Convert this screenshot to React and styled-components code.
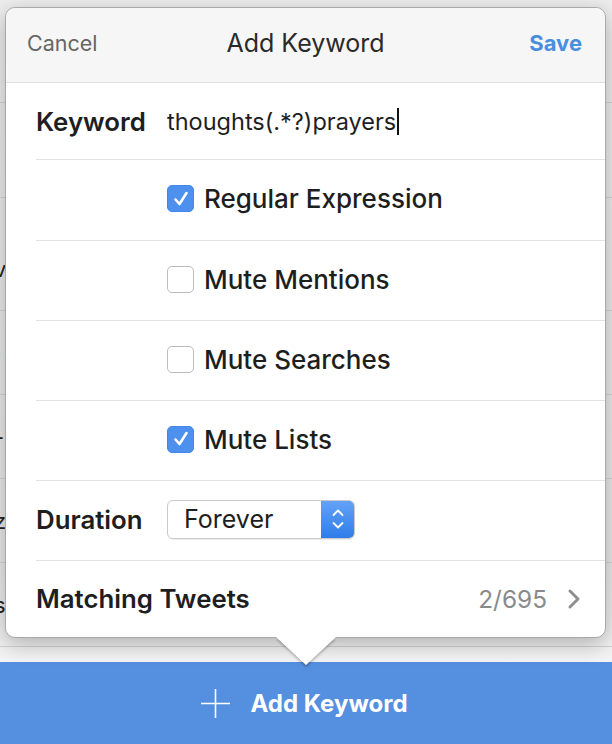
import React from 'react';
import styled, { createGlobalStyle } from 'styled-components';

const GlobalStyle = createGlobalStyle`
  html, body {
    margin: 0;
    padding: 0;
    background: #f4f4f4;
  }
  * {
    box-sizing: border-box;
  }
`;

const Page = styled.div`
  position: relative;
  width: 612px;
  height: 744px;
  overflow: hidden;
  display: flex;
  flex-direction: column;
  font-family: Inter, 'Noto Sans', sans-serif;
  background: #f3f3f3;
`;

// the list that sits behind the popover, only its edges show
const BackList = styled.div`
  flex: 1;
  min-height: 0;
  overflow: hidden;
  display: flex;
  flex-direction: column;
  background: linear-gradient(#eeeeee, #e9e9e9 85%, #f4f4f4);
`;

const BackRow = styled.div`
  height: ${p => p.$h}px;
  flex-shrink: 0;
  display: flex;
  align-items: center;
  justify-content: space-between;
  border-bottom: ${p => (p.$plain ? 'none' : '1px solid #d4d4d4')};
  font-size: 22px;
  color: #222;
`;

const BackText = styled.span`
  margin-left: -6px;
`;

const BackLink = styled.span`
  color: #4a86d6;
  font-weight: 600;
  margin-right: -8px;
`;

const AddBar = styled.div`
  height: 82px;
  flex-shrink: 0;
  background: #558fdf;
  display: flex;
  align-items: center;
  justify-content: center;
  gap: 19px;
  color: #fff;
  font-size: 24px;
  font-weight: 700;
  padding-right: 4px;
`;

const Popover = styled.div`
  position: absolute;
  left: 5px;
  top: 7px;
  width: 601px;
  height: 631px;
  background: #fff;
  border: 1px solid #a9a9a9;
  border-radius: 10px;
  box-shadow: 0 6px 22px rgba(0, 0, 0, 0.28);
  display: flex;
  flex-direction: column;
`;

const Arrow = styled.div`
  position: absolute;
  left: 270px;
  bottom: -28px;
  width: 0;
  height: 0;
  border-left: 30px solid transparent;
  border-right: 30px solid transparent;
  border-top: 28px solid #fff;
  filter: drop-shadow(0 2px 1px rgba(0, 0, 0, 0.25));
`;

const Header = styled.div`
  height: 75px;
  flex-shrink: 0;
  display: grid;
  grid-template-columns: 1fr auto 1fr;
  align-items: center;
  padding: 0 23px 4px 21px;
  background: #f6f6f6;
  border-bottom: 1px solid #dcdcdc;
  border-radius: 10px 10px 0 0;
`;

const HeaderButton = styled.span`
  font-size: ${p => (p.$primary ? 22 : 21.5)}px;
  color: ${p => (p.$primary ? '#4a8ee0' : '#666')};
  font-weight: ${p => (p.$primary ? 700 : 400)};
  justify-self: ${p => (p.$primary ? 'end' : 'start')};
`;

const Title = styled.span`
  font-size: 25px;
  color: #2a2a2a;
  font-weight: 400;
  margin-left: 2px;
`;

const Row = styled.div`
  height: ${p => p.$h || 80}px;
  flex-shrink: 0;
  display: flex;
  align-items: center;
  margin-left: 30px;
  padding-right: 24px;
  padding-bottom: ${p => (p.$first ? 0 : 3)}px;
  border-bottom: ${p => (p.$last ? 'none' : '1px solid #e2e2e2')};
`;

const Label = styled.span`
  width: ${p => (p.$auto ? 'auto' : '131px')};
  flex-shrink: 0;
  font-size: 25.8px;
  font-weight: 600;
  color: #1e1e1e;
`;

const Value = styled.span`
  font-size: 23.5px;
  color: #1e1e1e;
  display: flex;
  align-items: center;
`;

const Caret = styled.span`
  display: inline-block;
  width: 1.5px;
  height: 27px;
  background: #111;
  margin-left: 1px;
`;

const CheckLine = styled.label`
  margin-left: 131px;
  display: flex;
  align-items: center;
  gap: 10px;
  font-size: 26px;
  font-weight: 500;
  color: #1e1e1e;
`;

const Box = styled.span`
  width: 27px;
  height: 27px;
  border-radius: 5px;
  display: flex;
  align-items: center;
  justify-content: center;
  background: ${p => (p.$on ? '#4d90ee' : '#fff')};
  border: 1px solid ${p => (p.$on ? '#4388ea' : '#bcbcbc')};
`;

const Popup = styled.div`
  width: 188px;
  height: 39px;
  display: flex;
  border: 1px solid #cacaca;
  border-radius: 6px;
  overflow: hidden;
  box-shadow: 0 1px 1px rgba(0, 0, 0, 0.08);
`;

const PopupText = styled.span`
  flex: 1;
  padding-left: 16px;
  display: flex;
  align-items: center;
  font-size: 25px;
  color: #1e1e1e;
`;

const Stepper = styled.span`
  width: 33px;
  background: linear-gradient(#64a2f7, #2f7de9);
  display: flex;
  align-items: center;
  justify-content: center;
`;

const Spacer = styled.span`
  flex: 1;
`;

const Count = styled.span`
  font-size: 24.4px;
  color: #8a8a8a;
  margin-right: 20px;
`;

function Check() {
  return (
    <svg width="18" height="18" viewBox="0 0 18 18">
      <path d="M3.5 9.5 L7.5 14 L14.5 3" fill="none" stroke="#fff" strokeWidth="2.6" strokeLinecap="round" strokeLinejoin="round" />
    </svg>
  );
}

function Checkbox({ on, children }) {
  return (
    <CheckLine>
      <Box $on={on}>{on && <Check />}</Box>
      {children}
    </CheckLine>
  );
}

// rows of the list behind the popover: height, left glyph, right glyph
const backRows = [
  [103, '', 'r'],
  [95, '', 'r'],
  [30, '', '', true],
  [83, 'v', ''],
  [84, ')', 'r'],
  [84, '-', 'r'],
  [84, 'z', 'r'],
  [84, 's', 'r'],
  [84, '', ''],
];

export default function App() {
  return (
    <>
      <GlobalStyle />
      <Page>
        <BackList>
          {backRows.map(([h, left, right, plain], i) => (
            <BackRow key={i} $h={h} $plain={plain}>
              <BackText>{left}</BackText>
              <BackLink>{right}</BackLink>
            </BackRow>
          ))}
        </BackList>
        <AddBar>
          <svg width="31" height="31" viewBox="0 0 31 31">
            <path d="M15.5 1 V30 M1 15.5 H30" stroke="#fff" strokeWidth="1.6" />
          </svg>
          <span>Add Keyword</span>
        </AddBar>

        <Popover>
          <Header>
            <HeaderButton>Cancel</HeaderButton>
            <Title>Add Keyword</Title>
            <HeaderButton $primary>Save</HeaderButton>
          </Header>
          <Row $h={77} $first>
            <Label>Keyword</Label>
            <Value>
              thoughts(.*?)prayers<Caret />
            </Value>
          </Row>
          <Row $h={81}>
            <Checkbox on>Regular Expression</Checkbox>
          </Row>
          <Row>
            <Checkbox>Mute Mentions</Checkbox>
          </Row>
          <Row>
            <Checkbox>Mute Searches</Checkbox>
          </Row>
          <Row>
            <Checkbox on>Mute Lists</Checkbox>
          </Row>
          <Row>
            <Label>Duration</Label>
            <Popup>
              <PopupText>Forever</PopupText>
              <Stepper>
                <svg width="14" height="26" viewBox="0 0 14 26">
                  <path d="M2.5 9 L7 4.5 L11.5 9 M2.5 17 L7 21.5 L11.5 17" fill="none" stroke="#fff" strokeWidth="1.8" strokeLinecap="round" strokeLinejoin="round" />
                </svg>
              </Stepper>
            </Popup>
          </Row>
          <Row $last $h={78}>
            <Label $auto>Matching Tweets</Label>
            <Spacer />
            <Count>2/695</Count>
            <svg width="14" height="22" viewBox="0 0 14 22">
              <path d="M3 3 L11 11 L3 19" fill="none" stroke="#8f8f8f" strokeWidth="3" strokeLinecap="round" strokeLinejoin="round" />
            </svg>
          </Row>
          <Arrow />
        </Popover>
      </Page>
    </>
  );
}
